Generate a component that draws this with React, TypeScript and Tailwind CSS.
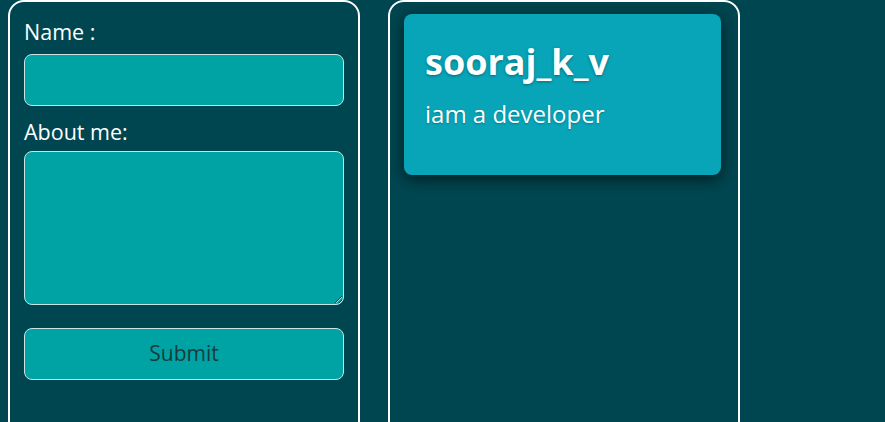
import React from 'react';

const App: React.FC = () => {
  return (
    <div className="min-h-screen h-[422px] overflow-hidden bg-[#004650] font-['Open_Sans',sans-serif] text-white">
      <div className="flex gap-[28px] pl-[8px]">
        {/* FORM PANEL */}
        <section className="w-[352px] h-[440px] border-2 border-white rounded-[16px] px-[14px] pt-[16px]">
          <label className="block text-[21.5px] leading-[28px] mb-[8px]">Name :</label>
          <input
            type="text"
            className="block w-[320px] h-[52px] rounded-[8px] border border-[#c8e4e4] bg-[#00a3a3] outline-none px-3"
          />
          <label className="block text-[21.5px] leading-[28px] mt-[12px] mb-[5px]">About me:</label>
          <textarea className="block w-[320px] h-[154px] rounded-[8px] border border-[#c8e4e4] bg-[#00a3a3] outline-none resize" />
          <button className="block mt-[23px] w-[320px] h-[52px] rounded-[8px] border border-[#c8e4e4] bg-[#00a3a3] text-[21px] text-[#173b3d]">
            Submit
          </button>
        </section>

        {/* PREVIEW PANEL */}
        <section className="w-[352px] h-[440px] border-2 border-white rounded-[16px] px-[14px] pt-[12px]">
          <div className="w-[317px] h-[161px] rounded-[8px] bg-[#08a4b8] px-[21px] pt-[25px] shadow-[0_4px_16px_rgba(0,0,0,0.6)]">
            <h1 className="text-[36px] font-bold leading-[46px] [text-shadow:0_1px_3px_rgba(0,0,0,0.35)]">sooraj_k_v</h1>
            <p className="mt-[13px] text-[24px] leading-[32px] [text-shadow:0_1px_2px_rgba(0,0,0,0.25)]">iam a developer</p>
          </div>
        </section>
      </div>
    </div>
  );
};

export default App;
